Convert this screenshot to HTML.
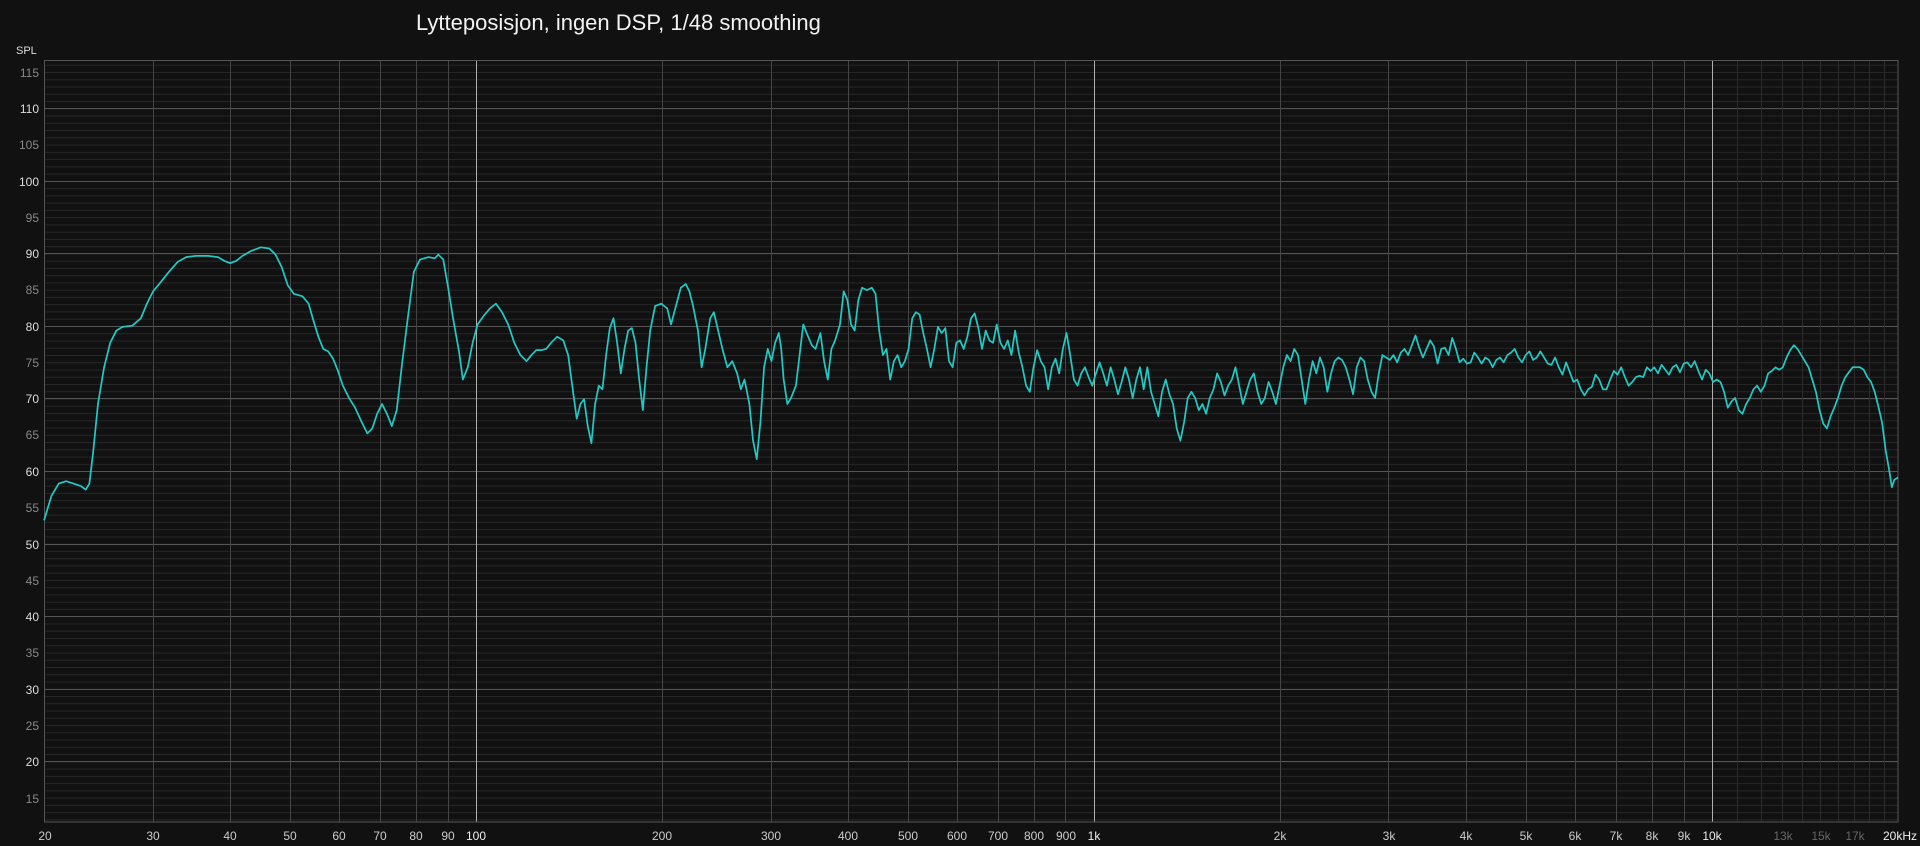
<!DOCTYPE html>
<html><head><meta charset="utf-8"><style>
html,body{margin:0;padding:0;background:#111;width:1920px;height:846px;overflow:hidden}
svg{position:absolute;left:0;top:0}
text{font-family:"Liberation Sans",sans-serif}
</style></head><body>
<svg width="1920" height="846" viewBox="0 0 1920 846">
<defs>
<pattern id="h" x="0" y="108.3" width="20" height="7.256" patternUnits="userSpaceOnUse">
<line x1="0" y1="0.5" x2="20" y2="0.5" stroke="#272727" stroke-width="1"/>
</pattern>
</defs>
<rect width="1920" height="846" fill="#111"/>
<rect x="44.5" y="60.5" width="1853.5" height="761.5" fill="url(#h)"/>
<g stroke="#555" stroke-width="1">
<line x1="44" y1="108.5" x2="1898" y2="108.5"/>
<line x1="44" y1="181.5" x2="1898" y2="181.5"/>
<line x1="44" y1="253.5" x2="1898" y2="253.5"/>
<line x1="44" y1="326.5" x2="1898" y2="326.5"/>
<line x1="44" y1="398.5" x2="1898" y2="398.5"/>
<line x1="44" y1="471.5" x2="1898" y2="471.5"/>
<line x1="44" y1="544.5" x2="1898" y2="544.5"/>
<line x1="44" y1="616.5" x2="1898" y2="616.5"/>
<line x1="44" y1="689.5" x2="1898" y2="689.5"/>
<line x1="44" y1="761.5" x2="1898" y2="761.5"/>
</g>
<g stroke="#454545" stroke-width="1">
<line x1="153.5" y1="60" x2="153.5" y2="822"/><line x1="230.5" y1="60" x2="230.5" y2="822"/>
<line x1="290.5" y1="60" x2="290.5" y2="822"/><line x1="339.5" y1="60" x2="339.5" y2="822"/>
<line x1="380.5" y1="60" x2="380.5" y2="822"/><line x1="416.5" y1="60" x2="416.5" y2="822"/>
<line x1="448.5" y1="60" x2="448.5" y2="822"/>
<line x1="662.5" y1="60" x2="662.5" y2="822"/><line x1="771.5" y1="60" x2="771.5" y2="822"/>
<line x1="848.5" y1="60" x2="848.5" y2="822"/><line x1="908.5" y1="60" x2="908.5" y2="822"/>
<line x1="957.5" y1="60" x2="957.5" y2="822"/><line x1="998.5" y1="60" x2="998.5" y2="822"/>
<line x1="1034.5" y1="60" x2="1034.5" y2="822"/><line x1="1065.5" y1="60" x2="1065.5" y2="822"/>
<line x1="1280.5" y1="60" x2="1280.5" y2="822"/><line x1="1388.5" y1="60" x2="1388.5" y2="822"/>
<line x1="1466.5" y1="60" x2="1466.5" y2="822"/><line x1="1526.5" y1="60" x2="1526.5" y2="822"/>
<line x1="1575.5" y1="60" x2="1575.5" y2="822"/><line x1="1616.5" y1="60" x2="1616.5" y2="822"/>
<line x1="1652.5" y1="60" x2="1652.5" y2="822"/><line x1="1684.5" y1="60" x2="1684.5" y2="822"/>
</g>
<g stroke="#2c2c2c" stroke-width="1">
<line x1="1737.5" y1="60" x2="1737.5" y2="822"/><line x1="1761.5" y1="60" x2="1761.5" y2="822"/>
<line x1="1782.5" y1="60" x2="1782.5" y2="822"/><line x1="1802.5" y1="60" x2="1802.5" y2="822"/>
<line x1="1820.5" y1="60" x2="1820.5" y2="822"/><line x1="1838.5" y1="60" x2="1838.5" y2="822"/>
<line x1="1854.5" y1="60" x2="1854.5" y2="822"/><line x1="1869.5" y1="60" x2="1869.5" y2="822"/>
<line x1="1884.5" y1="60" x2="1884.5" y2="822"/>
</g>
<g stroke="#b0b0b0" stroke-width="1">
<line x1="476.5" y1="60" x2="476.5" y2="822"/><line x1="1094.5" y1="60" x2="1094.5" y2="822"/>
<line x1="1712.5" y1="60" x2="1712.5" y2="822"/>
</g>
<rect x="44.5" y="60.5" width="1853.5" height="761.5" fill="none" stroke="#555" stroke-width="1"/>
<text x="416" y="30" font-size="22" fill="#f2f2f2">Lytteposisjon, ingen DSP, 1/48 smoothing</text>
<text x="16" y="54" font-size="11" fill="#ddd">SPL</text>
<g font-size="12" text-anchor="end">
<text x="39" y="77" fill="#888">115</text><text x="39" y="113" fill="#ddd">110</text>
<text x="39" y="149" fill="#888">105</text><text x="39" y="186" fill="#ddd">100</text>
<text x="39" y="222" fill="#888">95</text><text x="39" y="258" fill="#ddd">90</text>
<text x="39" y="294" fill="#888">85</text><text x="39" y="331" fill="#ddd">80</text>
<text x="39" y="367" fill="#888">75</text><text x="39" y="403" fill="#ddd">70</text>
<text x="39" y="439" fill="#888">65</text><text x="39" y="476" fill="#ddd">60</text>
<text x="39" y="512" fill="#888">55</text><text x="39" y="549" fill="#ddd">50</text>
<text x="39" y="585" fill="#888">45</text><text x="39" y="621" fill="#ddd">40</text>
<text x="39" y="657" fill="#888">35</text><text x="39" y="694" fill="#ddd">30</text>
<text x="39" y="730" fill="#888">25</text><text x="39" y="766" fill="#ddd">20</text>
<text x="39" y="803" fill="#888">15</text>
</g>
<g font-size="12" fill="#ccc" text-anchor="middle">
<text x="45" y="840">20</text><text x="153" y="840">30</text><text x="230" y="840">40</text>
<text x="290" y="840">50</text><text x="339" y="840">60</text><text x="380" y="840">70</text>
<text x="416" y="840">80</text><text x="448" y="840">90</text><text x="476" y="840" fill="#eee">100</text>
<text x="662" y="840">200</text><text x="771" y="840">300</text><text x="848" y="840">400</text>
<text x="908" y="840">500</text><text x="957" y="840">600</text><text x="998" y="840">700</text>
<text x="1034" y="840">800</text><text x="1066" y="840">900</text><text x="1094" y="840" fill="#eee">1k</text>
<text x="1280" y="840">2k</text><text x="1389" y="840">3k</text><text x="1466" y="840">4k</text>
<text x="1526" y="840">5k</text><text x="1575" y="840">6k</text><text x="1616" y="840">7k</text>
<text x="1652" y="840">8k</text><text x="1684" y="840">9k</text><text x="1712" y="840" fill="#eee">10k</text>
<text x="1783" y="840" fill="#666">13k</text><text x="1821" y="840" fill="#666">15k</text>
<text x="1855" y="840" fill="#666">17k</text><text x="1900" y="840" fill="#eee">20kHz</text>
</g>
</svg>
<svg width="1920" height="846" viewBox="0 0 1568 691" preserveAspectRatio="none">
<polyline fill="none" stroke="#22cac6" stroke-width="1.4" stroke-linejoin="round" points="36,425 42,405 48,395 54,393 60,395 66,397 70,400 73,395 76,370 80,330 85,300 90,280 95,270 100,267 108,266 115,260 120,248 125,238 130,232 138,222 145,214 152,210 160,209 170,209 178,210 183,213 188,215 193,213 198,209 205,205 213,202 220,203 225,208 230,218 235,233 240,240 247,242 252,248 256,262 260,275 264,285 268,287 272,293 276,303 280,315 285,325 290,333 295,344 300,354 304,350 308,338 312,330 316,338 320,348 324,335 328,300 333,260 338,222 343,212 350,210 355,211 358,208 362,212 366,235 370,260 375,288 378,310 382,300 386,280 390,265 395,258 400,252 405,248 410,255 415,265 420,280 425,290 430,295 434,290 438,286 442,286 446,285 450,280 455,275 460,278 464,290 468,320 471,342 474,330 477,326 480,348 483,362 486,330 489,315 492,318 495,290 498,268 501,260 504,280 507,305 510,285 513,270 516,268 519,280 522,310 525,335 528,300 531,270 535,250 540,248 545,252 548,265 552,250 556,235 560,232 563,238 566,250 570,270 573,300 576,285 580,260 583,255 586,268 590,285 594,300 598,295 602,305 605,318 608,310 612,330 615,360 618,375 621,345 624,300 627,285 630,295 633,280 636,272 638,285 640,310 643,330 646,325 650,315 653,290 656,265 660,275 663,282 666,285 670,272 673,295 676,310 679,285 682,278 686,265 689,238 692,245 695,265 698,270 701,245 704,235 708,237 712,235 715,240 718,270 721,290 724,285 727,310 730,295 733,290 736,300 739,295 742,285 745,260 748,255 751,257 754,272 757,285 760,300 763,285 766,267 769,272 772,268 775,295 778,300 781,280 784,278 787,285 790,275 793,260 796,256 799,268 802,285 805,270 808,278 811,280 814,265 817,280 820,285 823,278 826,290 829,270 832,288 835,300 838,315 841,320 844,300 847,286 850,295 853,300 856,318 859,300 862,293 865,305 868,285 871,272 874,290 877,310 880,315 883,305 886,300 889,308 892,315 895,305 898,296 901,305 904,315 907,300 910,310 913,322 916,312 919,300 922,310 925,325 928,310 931,300 934,318 937,300 940,320 943,330 946,340 949,320 952,310 955,322 958,330 961,350 964,360 967,345 970,325 973,320 976,325 979,335 982,330 985,338 988,325 991,318 994,305 997,312 1000,323 1003,315 1006,310 1009,300 1012,315 1015,330 1018,320 1021,310 1024,305 1027,320 1030,330 1033,325 1036,312 1039,320 1042,330 1045,315 1048,300 1051,290 1054,295 1057,285 1060,290 1063,310 1066,330 1069,310 1072,295 1075,305 1078,292 1081,300 1084,320 1087,305 1090,295 1093,292 1096,294 1099,300 1102,310 1105,322 1108,300 1111,292 1114,295 1117,310 1120,320 1123,325 1126,305 1129,290 1132,292 1135,294 1138,290 1141,296 1144,288 1147,285 1150,290 1153,282 1156,274 1159,284 1162,292 1165,285 1168,278 1171,283 1174,297 1177,285 1180,284 1183,290 1186,276 1189,285 1192,296 1195,293 1198,297 1201,296 1204,288 1207,292 1210,297 1213,292 1216,294 1219,300 1222,294 1225,292 1228,296 1231,290 1234,288 1237,285 1240,292 1243,296 1246,290 1249,287 1252,294 1255,292 1258,287 1261,292 1264,297 1267,298 1270,292 1273,300 1276,306 1279,296 1282,304 1285,312 1288,310 1291,318 1294,323 1297,318 1300,316 1303,306 1306,310 1309,318 1312,318 1315,310 1318,303 1321,306 1324,300 1327,308 1330,315 1333,312 1336,308 1339,307 1342,308 1345,300 1348,303 1351,300 1354,305 1357,298 1360,302 1363,306 1366,300 1369,298 1372,304 1375,297 1378,296 1381,300 1384,295 1387,303 1390,310 1393,302 1396,305 1399,312 1402,310 1405,312 1408,320 1411,333 1414,328 1417,325 1420,335 1423,338 1426,330 1429,325 1432,318 1435,315 1438,320 1441,315 1444,305 1447,303 1450,300 1453,302 1456,300 1459,292 1462,286 1465,282 1468,285 1471,290 1474,295 1477,300 1480,310 1483,320 1486,335 1489,346 1492,350 1495,340 1498,333 1501,325 1504,315 1507,308 1510,304 1513,300 1516,300 1519,300 1522,302 1525,308 1528,312 1531,320 1534,332 1537,345 1540,368 1543,385 1545,398 1547,392 1550,390"/>
</svg>
</body></html>
